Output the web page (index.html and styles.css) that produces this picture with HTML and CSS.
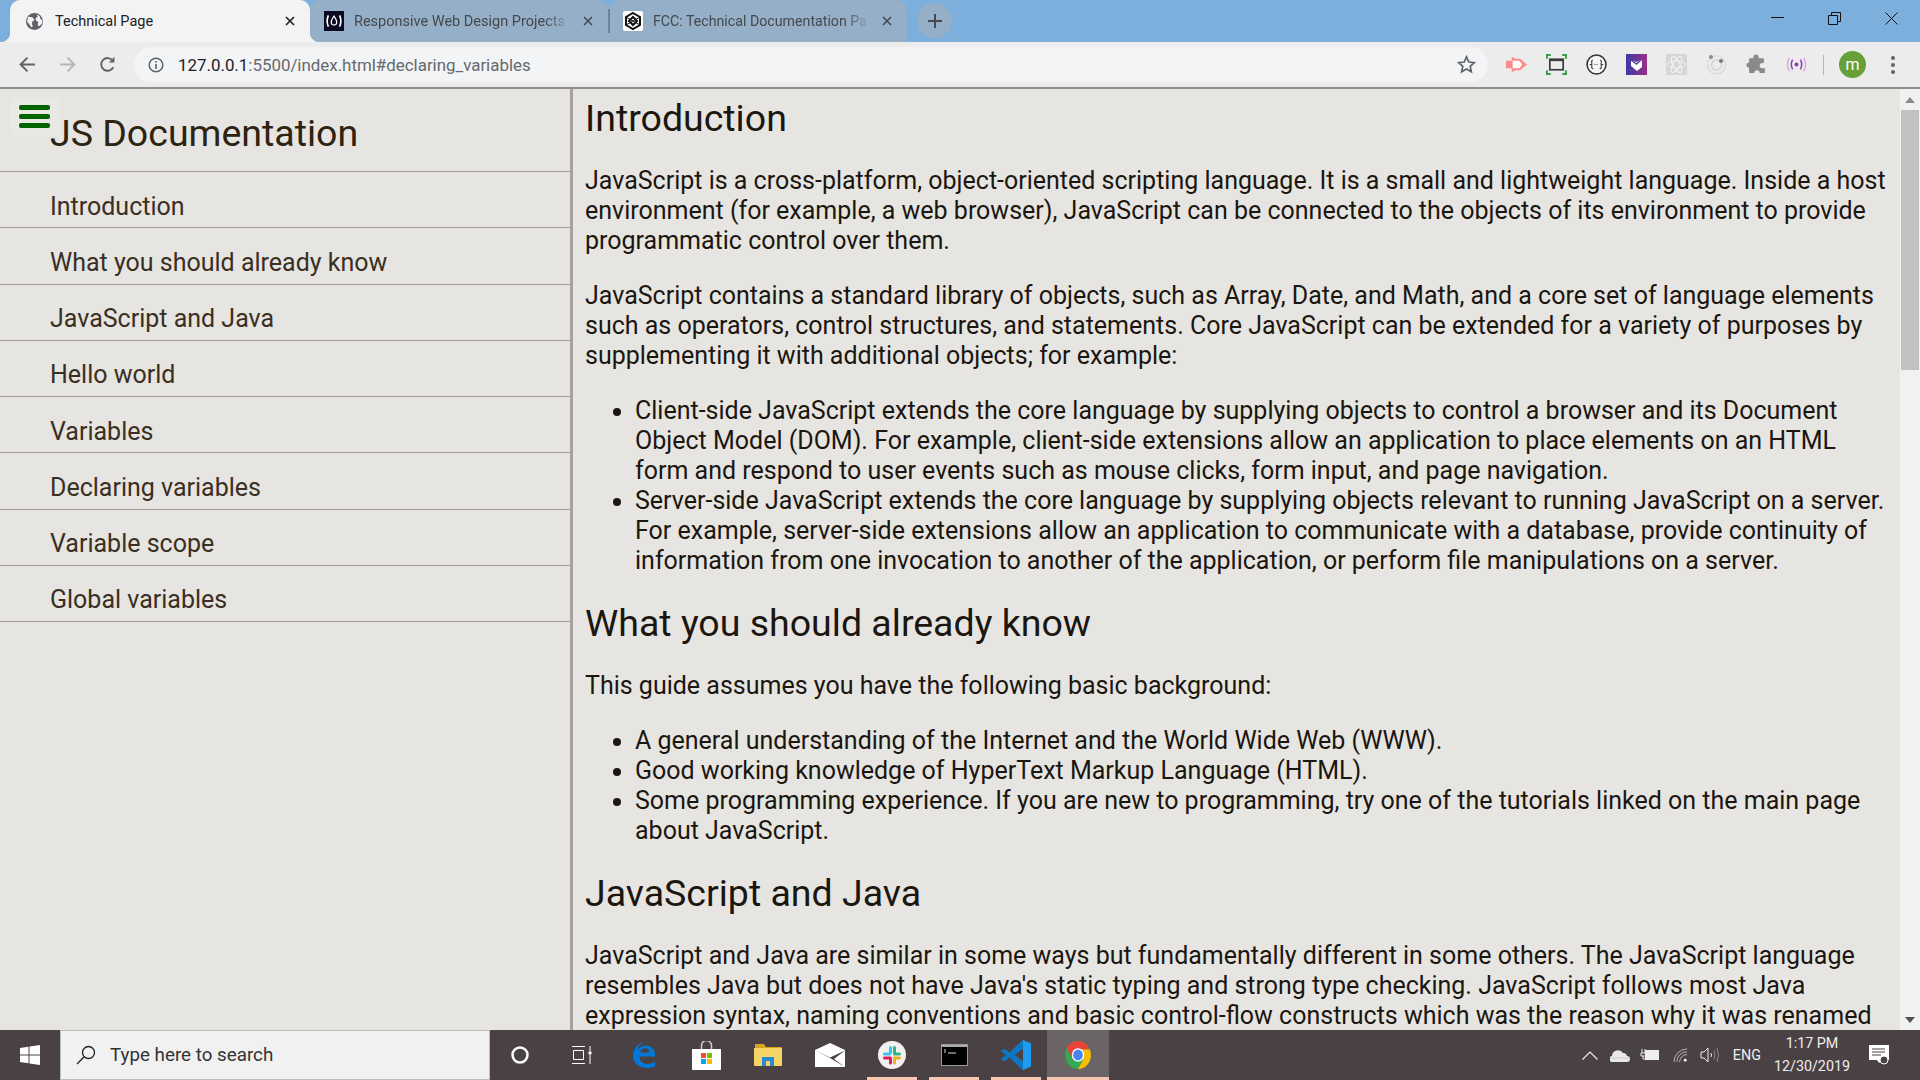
FILE: index.html
```html
<!DOCTYPE html>
<html lang="en">
<head>
<meta charset="utf-8">
<title>Technical Page</title>
<link rel="stylesheet" href="styles.css">
</head>
<body>
<div class="window">
  <header class="tabstrip">
    <div class="tab tab-active">
      <svg class="fav fav-globe" viewBox="0 0 16 16"><circle cx="8" cy="8" r="8" fill="#5f6368"/><path d="M2 3.500l4 .5 2 2.500-2 1.500-.5 2 1 2.500-1.500 1-2-3-2-2.500zM10 1.500l3 1.500.5 2.500 2 1.500-.5 3-2.500 2.500-1.500-1 .5-3-2-1.500-.5-2 2-1.500z" fill="#f3f3f4"/></svg>
      <span class="tab-title">Technical Page</span>
      <svg class="tab-x" viewBox="0 0 10 10"><path d="M1 1l8 8M9 1l-8 8" stroke="#202124" stroke-width="1.700"/></svg>
    </div>
    <div class="tab tab-second">
      <svg class="fav" viewBox="0 0 16 16"><rect width="16" height="16" fill="#0a0a23"/><path d="M3.500 3.500Q1.500 8 3.500 12.500M12.500 3.500Q14.500 8 12.500 12.500" stroke="#fff" stroke-width="1.300" fill="none"/><path d="M8 4q3 4 1.800 6.500-1.800 1.500-3.600 0Q5 8 8 4z" fill="none" stroke="#fff"/></svg>
      <span class="tab-title tab-fade">Responsive Web Design Projects</span>
      <svg class="tab-x" viewBox="0 0 10 10"><path d="M1 1l8 8M9 1l-8 8" stroke="#45484c" stroke-width="1.500"/></svg>
    </div>
    <i class="tab-sep"></i>
    <div class="tab tab-third">
      <svg class="fav" viewBox="0 0 20 20"><rect width="20" height="20" rx="2" fill="#fff"/><path d="M10 2l7 4v8l-7 4-7-4V6z" fill="none" stroke="#111" stroke-width="2"/><path d="M10 6l4 4-4 4-4-4z" fill="none" stroke="#111" stroke-width="2"/><path d="M3 6l14 8M17 6L3 14" stroke="#111" stroke-width="1"/></svg>
      <span class="tab-title tab-fade">FCC: Technical Documentation Pa</span>
      <svg class="tab-x" viewBox="0 0 10 10"><path d="M1 1l8 8M9 1l-8 8" stroke="#45484c" stroke-width="1.500"/></svg>
    </div>
    <div class="newtab"><svg viewBox="0 0 14 14"><path d="M7 0v14M0 7h14" stroke="#45484c" stroke-width="2"/></svg></div>
    <div class="winctl">
      <svg viewBox="0 0 13 13"><path d="M0 5.500h13" stroke="#111" stroke-width="1"/></svg>
      <svg viewBox="0 0 13 13"><path d="M.5 3.500h9v9h-9zM3.500 3.500V.5h9v9h-3" fill="none" stroke="#111"/></svg>
      <svg viewBox="0 0 13 13"><path d="M.5.5l12 12M12.500.5l-12 12" stroke="#111" fill="none"/></svg>
    </div>
  </header>

  <nav class="toolbar">
    <svg class="tb" viewBox="0 0 16 16"><path d="M15 8H2M8 1.500L1.500 8 8 14.500" fill="none" stroke="#5f6368" stroke-width="1.800"/></svg>
    <svg class="tb" viewBox="0 0 16 16"><path d="M1 8h13M8 1.500L14.500 8 8 14.500" fill="none" stroke="#b4b6b9" stroke-width="1.800"/></svg>
    <svg class="tb" viewBox="0 0 16 16"><path d="M13.500 10.500A6 6 0 1 1 13 4.500" fill="none" stroke="#5f6368" stroke-width="1.800"/><path d="M14.500.8v5.200H9.300z" fill="#5f6368"/></svg>
    <div class="omni">
      <svg class="info" viewBox="0 0 16 16"><circle cx="8" cy="8" r="6.800" fill="none" stroke="#5f6368" stroke-width="1.500"/><path d="M8 7v5M8 4v1.800" stroke="#5f6368" stroke-width="1.600"/></svg>
      <span class="url"><b>127.0.0.1</b>:5500/index.html#declaring_variables</span>
      <svg class="star" viewBox="0 0 20 20"><path d="M10 2l2.400 5.400 5.800.6-4.300 3.900 1.200 5.800L10 14.800l-5.100 2.900 1.200-5.800L1.800 8l5.800-.6z" fill="none" stroke="#5f6368" stroke-width="1.800"/></svg>
    </div>
    <div class="exts">
      <svg viewBox="0 0 22 20"><path d="M0 6h6V2l4 2h5l7 6-7 6h-5l-4 2v-4H0z" fill="#fb8b8b"/><path d="M7 6h7l3 4-3 4H7z" fill="#fff"/></svg>
      <svg viewBox="0 0 22 22"><path d="M1 5V1h4M17 1h4v4M21 17v4h-4M5 21H1v-4" fill="none" stroke="#3f9a45" stroke-width="2"/><rect x="4" y="5.500" width="14" height="11" fill="none" stroke="#3c3c3c" stroke-width="1.800"/><path d="M4 6.500h14" stroke="#3c3c3c" stroke-width="2"/></svg>
      <svg viewBox="0 0 20 20"><circle cx="10" cy="10" r="9" fill="#f7f7f7" stroke="#333" stroke-width="1.500"/><path d="M6.500 6Q5 6 5.500 8.500T4.500 10q1.500 0 1 2T7 14M13.500 6q1.500 0 1 2.500t1 1.500q-1.500 0-1 2T13 14" fill="none" stroke="#333"/><path d="M8 10h4" stroke="#555" stroke-dasharray="1 1"/></svg>
      <svg viewBox="0 0 21 21"><defs><linearGradient id="gr"><stop offset="0" stop-color="#3c3aa8"/><stop offset="1" stop-color="#9a2f86"/></linearGradient></defs><rect width="21" height="21" fill="url(#gr)"/><path d="M5 6l5.500 2L16 5v8l-5 4-6-5z" fill="#fff"/><path d="M5 6l5.500 4L16 5" fill="none" stroke="#5a3aa0" stroke-width="1.500"/></svg>
      <svg viewBox="0 0 21 21"><rect width="21" height="21" fill="#d6d6d6"/><g fill="none" stroke="#f4f4f4"><ellipse cx="10.500" cy="10.500" rx="9" ry="3.500"/><ellipse cx="10.500" cy="10.500" rx="9" ry="3.500" transform="rotate(60 10.500 10.500)"/><ellipse cx="10.500" cy="10.500" rx="9" ry="3.500" transform="rotate(120 10.500 10.500)"/></g></svg>
      <svg viewBox="0 0 21 21"><circle cx="10.500" cy="11" r="9" fill="none" stroke="#dcdcdc" stroke-width="1.500"/><circle cx="10.500" cy="11" r="5" fill="none" stroke="#d4d4d4" stroke-width="1.500"/><circle cx="5" cy="3" r="2" fill="#8a8a8a"/><circle cx="15" cy="7" r="2" fill="#777"/></svg>
      <svg viewBox="0 0 20 20"><path d="M7 3a2.500 2.500 0 0 1 5 0l0 1h5v4.500h-1.500a2.500 2.500 0 0 0 0 5H18V18H13a2.500 2.500 0 0 0-5 0H3v-5a2.500 2.500 0 0 1 0-5V4h4z" fill="#8a8a8a"/></svg>
      <svg viewBox="0 0 22 20"><circle cx="11" cy="10" r="2" fill="#8f35b8"/><path d="M7 5Q4 10 7 15M15 5q3 5 0 10" fill="none" stroke="#8f35b8" stroke-width="1.500"/><path d="M3.500 3Q-.5 10 3.500 17M18.500 3q4 7 0 14" fill="none" stroke="#dba4ee" stroke-width="1.500"/></svg>
    </div>
    <i class="tb-sep"></i>
    <div class="avatar">m</div>
    <svg class="kebab" viewBox="0 0 6 20"><circle cx="3" cy="3" r="2" fill="#5f6368"/><circle cx="3" cy="10" r="2" fill="#5f6368"/><circle cx="3" cy="17" r="2" fill="#5f6368"/></svg>
  </nav>

  <div class="viewport">
    <aside class="sidebar">
      <div class="side-head">
        <div class="burger"><i></i><i></i><i></i></div>
        <h1 class="side-title">JS Documentation</h1>
      </div>
      <a class="side-link">Introduction</a>
      <a class="side-link">What you should already know</a>
      <a class="side-link">JavaScript and Java</a>
      <a class="side-link">Hello world</a>
      <a class="side-link">Variables</a>
      <a class="side-link">Declaring variables</a>
      <a class="side-link">Variable scope</a>
      <a class="side-link">Global variables</a>
    </aside>
    <main class="doc">
      <h2>Introduction</h2>
      <p>JavaScript is a cross-platform, object-oriented scripting language. It is a small and lightweight language. Inside a host environment (for example, a web browser), JavaScript can be connected to the objects of its environment to provide programmatic control over them.</p>
      <p>JavaScript contains a standard library of objects, such as Array, Date, and Math, and a core set of language elements such as operators, control structures, and statements. Core JavaScript can be extended for a variety of purposes by supplementing it with additional objects; for example:</p>
      <ul>
        <li>Client-side JavaScript extends the core language by supplying objects to control a browser and its Document Object Model (DOM). For example, client-side extensions allow an application to place elements on an HTML form and respond to user events such as mouse clicks, form input, and page navigation.</li>
        <li>Server-side JavaScript extends the core language by supplying objects relevant to running JavaScript on a server. For example, server-side extensions allow an application to communicate with a database, provide continuity of information from one invocation to another of the application, or perform file manipulations on a server.</li>
      </ul>
      <h2>What you should already know</h2>
      <p>This guide assumes you have the following basic background:</p>
      <ul>
        <li>A general understanding of the Internet and the World Wide Web (WWW).</li>
        <li>Good working knowledge of HyperText Markup Language (HTML).</li>
        <li>Some programming experience. If you are new to programming, try one of the tutorials linked on the main page about JavaScript.</li>
      </ul>
      <h2>JavaScript and Java</h2>
      <p>JavaScript and Java are similar in some ways but fundamentally different in some others. The JavaScript language resembles Java but does not have Java's static typing and strong type checking. JavaScript follows most Java expression syntax, naming conventions and basic control-flow constructs which was the reason why it was renamed</p>
    </main>
    <div class="scrollbar">
      <svg class="sb-arrow" viewBox="0 0 10 6"><path d="M5 0l5 6H0z" fill="#8a8a8a"/></svg>
      <div class="sb-track"><div class="sb-thumb"></div></div>
      <svg class="sb-arrow" viewBox="0 0 10 6"><path d="M0 0h10L5 6z" fill="#505050"/></svg>
    </div>
  </div>

  <footer class="taskbar">
    <div class="start"><svg viewBox="0 0 20 20"><path d="M0 3l8.500-1.200v7.700H0zM9.500 1.600L20 0v9.500H9.500zM0 10.500h8.500v7.700L0 17zM9.500 10.500H20V20L9.500 18.400z" fill="#fff"/></svg></div>
    <div class="search">
      <svg viewBox="0 0 20 20"><circle cx="12.500" cy="7.500" r="6" fill="none" stroke="#222" stroke-width="1.300"/><path d="M8.200 11.800L1 19" stroke="#222" stroke-width="1.300"/></svg>
      <span>Type here to search</span>
    </div>
    <div class="task-icons">
      <div class="ti"><svg class="ic-cortana" viewBox="0 0 18 18"><circle cx="9" cy="9" r="7.500" fill="none" stroke="#fff" stroke-width="2.500"/></svg></div>
      <div class="ti"><svg class="ic-view" viewBox="0 0 20 18"><path d="M0 .5h13M0 17.500h13M1.500 4.500h10v9h-10zM18 0v5M18 9v9" fill="none" stroke="#fff"/><rect x="16.500" y="5.500" width="3" height="3" fill="#fff"/></svg></div>
      <div class="ti"><svg class="ic-edge" viewBox="0 0 24 26"><path d="M23 14.500H7.500c0 5 3.500 7.500 8 7.500 2.800 0 5.300-.8 7.500-2.200v4.400c-2.300 1.200-5 1.800-8 1.800C6.500 26 1 21 1 13.500 1 7 5.500 1.500 12.500 0 8 2 6 5 5.800 7.500 8 4.800 11 3.500 14 3.500c5.500 0 9 4 9 9.500zM8 10.500h9.500c0-3-2-4.300-4.300-4.300-2.300 0-4.500 1.500-5.200 4.300z" fill="#0078d7" fill-rule="evenodd"/></svg></div>
      <div class="ti"><svg class="ic-store" viewBox="0 0 29 29"><path d="M9.500 8V4.500a5 5 0 0 1 10 0V8" fill="none" stroke="#cfcfcf" stroke-width="1.500"/><path d="M0 8h29v20a1 1 0 0 1-1 1H1a1 1 0 0 1-1-1z" fill="#fff"/><path d="M9 12h5v5H9z" fill="#f25022"/><path d="M15 12h5v5h-5z" fill="#7fba00"/><path d="M9 18h5v5H9z" fill="#00a4ef"/><path d="M15 18h5v5h-5z" fill="#ffb900"/></svg></div>
      <div class="ti"><svg class="ic-folder" viewBox="0 0 28 22"><path d="M1 0h9l2 3h15a1 1 0 0 1 1 1v17a1 1 0 0 1-1 1H1z" fill="#d9a520"/><path d="M0 4h28v17a1 1 0 0 1-1 1H1a1 1 0 0 1-1-1z" fill="#f6d365"/><path d="M8 13h12v9h-4v-5h-4v5H8z" fill="#2a8ad4"/></svg></div>
      <div class="ti"><svg class="ic-mail" viewBox="0 0 30 24"><path d="M0 7L15 0l15 7v17H0z" fill="#fff"/><path d="M0 7.500l15 7 15-7-11 8.500 11 8-15-9z" fill="#4a4145"/></svg></div>
      <div class="ti ti-run"><svg class="ic-slack" viewBox="0 0 28 28"><ellipse cx="14" cy="14" rx="14" ry="14" fill="#f4f0f0"/><rect x="5" y="11.500" width="8" height="3" rx="1.500" fill="#36c5f0"/><rect x="11" y="5" width="3" height="8" rx="1.500" fill="#36c5f0"/><rect x="15" y="5" width="3" height="8" rx="1.500" fill="#2eb67d"/><rect x="15" y="11.500" width="8" height="3" rx="1.500" fill="#2eb67d"/><rect x="15" y="15.500" width="8" height="3" rx="1.500" fill="#ecb22e"/><rect x="15" y="15.500" width="3" height="8" rx="1.500" fill="#ecb22e"/><rect x="5" y="15.500" width="8" height="3" rx="1.500" fill="#e01e5a"/><rect x="11" y="15.500" width="3" height="8" rx="1.500" fill="#e01e5a"/></svg></div>
      <div class="ti ti-run"><svg class="ic-term" viewBox="0 0 27 22"><rect x=".5" y=".5" width="26" height="21" fill="#000" stroke="#999"/><rect x="1" y="1" width="25" height="2" fill="#aaa"/><path d="M3 6h2M3 8h2M7 9h8" stroke="#ddd"/></svg></div>
      <div class="ti ti-run"><svg class="ic-code" viewBox="0 0 30 30"><path d="M22 0l8 3.500v23L22 30 8.500 17l-5 4L0 19l5.500-4L0 11l3.500-2 5 4zM22 8.500L13 15l9 6.500z" fill="#1f9cf0" fill-rule="evenodd"/><path d="M22 0L8.500 13l-5-4L0 11l5.500 4L0 19l3.500 2 5-4L22 30v-8.500L13 15l9-6.500z" fill="#0b76c4"/></svg></div>
      <div class="ti ti-run ti-on"><svg class="ic-chrome" viewBox="0 0 48 52"><ellipse cx="24" cy="26" rx="24" ry="26" fill="#34a853"/><path d="M24 0C15 0 8 4 3 12l11 22 10-18h22C42 6 34 0 24 0z" fill="#ea4335"/><path d="M46 16H24l10 18-10 18h2c13-1 22-12 22-26 0-3-1-7-2-10z" fill="#fbbc05"/><ellipse cx="24" cy="26" rx="11.500" ry="12.500" fill="#fff"/><ellipse cx="24" cy="26" rx="9" ry="10" fill="#4285f4"/></svg></div>
    </div>
    <div class="tray">
      <svg class="t-chev" viewBox="0 0 16 9"><path d="M.5 8.500L8 1l7.500 7.500" fill="none" stroke="#eee" stroke-width="1.200"/></svg>
      <svg class="t-cloud" viewBox="0 0 20 13"><path d="M3 13a3 3 0 0 1-1-6 6 6 0 0 1 11-3 4 4 0 0 1 4 3 3 3 0 0 1 0 6z" fill="#e8e8e8"/><path d="M0 9h20" stroke="#bbb" stroke-width=".6"/></svg>
      <svg class="t-batt" viewBox="0 0 20 12"><path d="M2 0v4M5 0v4M1 4h5v3H1zM3 7v3h3" stroke="#eee" fill="none"/><rect x="5.500" y="1.500" width="13" height="9" fill="#eee" stroke="#eee"/></svg>
      <svg class="t-wifi" viewBox="0 0 16 16"><path d="M1 15A14 14 0 0 1 15 1M4 15A11 11 0 0 1 15 4M7 15a8 8 0 0 1 8-8" fill="none" stroke="#bbb"/><circle cx="13" cy="13" r="1.500" fill="#fff"/></svg>
      <svg class="t-vol" viewBox="0 0 20 16"><path d="M1 5h3l4-4v14l-4-4H1z" fill="none" stroke="#eee"/><path d="M11 6q1 2 0 4" fill="none" stroke="#eee"/><path d="M14 3.500q2 4.500 0 9M17 1q3 7 0 14" fill="none" stroke="#888"/></svg>
      <span class="t-lang">ENG</span>
      <div class="clock"><span>1:17 PM</span><span>12/30/2019</span></div>
      <svg class="t-note" viewBox="0 0 20 20"><path d="M0 0h20v15h-7l-3 3-2-3H0z" fill="#fff"/><path d="M3 4h13M3 7h13M3 10h9" stroke="#4a4145"/><circle cx="15" cy="15" r="4" fill="#4a4145" stroke="#fff"/></svg>
    </div>
  </footer>
</div>
</body>
</html>
```

FILE: styles.css
```css
* { box-sizing: border-box; }
html, body { margin: 0; height: 100%; overflow: hidden; }
body { font-family: Roboto, "Liberation Sans", sans-serif; color: #1b160f; }
svg { display: block; flex: none; }
.window { display: flex; flex-direction: column; height: 1080px; width: 1920px; }

.tabstrip { height: 42px; flex: none; background: #7dafdc; display: flex; padding-left: 10px; align-items: stretch; }
.tab { flex: none; display: flex; align-items: center; background: #94afc7; font-size: 14.500px; color: #45484c; border-radius: 10px 10px 0 0; position: relative; }
.tab-active { width: 300px; padding: 0 15px 0 16px; background: #f3f3f4; color: #202124; z-index: 1; }
.tab-active::before, .tab-active::after { content: ""; position: absolute; bottom: 0; width: 9px; height: 9px; }
.tab-active::before { left: -9px; background: radial-gradient(circle at 0 0, transparent 9px, #f3f3f4 9px); }
.tab-active::after { right: -9px; background: radial-gradient(circle at 100% 0, transparent 9px, #f3f3f4 9px); }
.tab-second { width: 298px; padding: 0 15px 0 14px; }
.tab-third { width: 297px; padding: 0 15px 0 13px; font-size: 14.200px; }
.tab-sep { width: 2px; flex: none; background: linear-gradient(#7dafdc 0 4px, #94afc7 4px 9px, #6f8499 9px 33px, #94afc7 33px); }
.fav { width: 20px; height: 20px; margin-right: 10px; }
.fav-globe { width: 17px; height: 17px; margin-right: 12px; }
.tab-title { flex: 1; white-space: nowrap; overflow: hidden; min-width: 0; }
.tab-fade { mask-image: linear-gradient(to right, #000 88%, transparent 100%); }
.tab-x { width: 10px; height: 10px; margin-left: 12px; }
.tab-active .tab-x { margin-left: 10px; }
.newtab { width: 35px; height: 35px; border-radius: 50%; background: #94afc7; margin: 3px 0 0 10px; display: flex; align-items: center; justify-content: center; }
.newtab svg { width: 14px; height: 14px; }
.winctl { margin-left: auto; display: flex; gap: 44px; padding: 12px 22px 0 0; align-self: flex-start; }
.winctl svg { width: 13px; height: 13px; }

.toolbar { height: 47px; flex: none; background: #ececec; border-bottom: 2px solid #8e8e8e; display: flex; align-items: center; padding: 0 0 0 19px; }
.tb { width: 17px; height: 17px; margin-right: 23px; }
.tb:nth-of-type(3) { margin-right: 18px; }
.omni { width: 1354px; height: 35px; border-radius: 18px; background: #f3f4f6; display: flex; align-items: center; padding: 0 12px 0 14px; }
.info { width: 16px; height: 16px; margin-right: 14px; }
.url { font-size: 16.900px; color: #66696d; flex: 1; white-space: nowrap; }
.url b { font-weight: 400; color: #202124; }
.star { width: 19px; height: 19px; }
.exts { display: flex; align-items: center; gap: 19px; margin-left: 18px; flex: none; }
.exts svg { width: 21px; height: 21px; }
.tb-sep { width: 1px; height: 20px; background: #b5b5b5; margin-left: 16px; flex: none; }
.avatar { width: 27px; height: 27px; flex: none; border-radius: 50%; background: #689f38; color: #fff; font-size: 16px; display: flex; align-items: center; justify-content: center; margin-left: 15px; }
.kebab { width: 6px; height: 20px; margin-left: 24px; }

.viewport { flex: 1; min-height: 0; display: flex; background: #e6e5e1; }
.sidebar { width: 573px; flex: none; border-right: 3px solid #a8a398; }
.side-head { height: 83px; position: relative; padding: 22px 0 0 50px; border-bottom: 1px solid #a09e96; color: #2c2310; }
.burger { position: absolute; left: 10px; top: 9px; width: 49px; height: 37px; padding: 7px 9px; display: flex; flex-direction: column; gap: 4px; background: #e9e8e3; }
.burger i { display: block; height: 6px; width: 31px; border-radius: 2px; background: #006400; }
.side-title { margin: 0; font-size: 37.500px; line-height: 45px; font-weight: 400; }
.side-link { display: block; height: 56.250px; padding: 19.500px 0 0 50px; line-height: 30px; font-size: 25px; color: #3a2f22; border-bottom: 1px solid #a09e96; }

.doc { flex: 1; min-width: 0; height: 100%; overflow: hidden; padding: 0 10px 0 12px; font-size: 25px; line-height: 30px; }
.doc h2 { font-size: 37.500px; line-height: 45px; font-weight: 400; margin: 25px 0; }
.doc h2:first-child { margin-top: 0; padding-top: 7px; }
.doc p { margin: 25px 0; }
.doc ul { margin: 25px 0; padding-left: 50px; }

.scrollbar { width: 20px; flex: none; background: #f1f1f1; display: flex; flex-direction: column; align-items: center; padding: 8px 0 7px; }
.sb-arrow { width: 10px; height: 6px; }
.sb-track { flex: 1; width: 100%; padding: 7px 1px; }
.sb-thumb { height: 260px; background: #c1c1c1; }

.taskbar { height: 50px; flex: none; display: flex; align-items: stretch; background: #4a4145; color: #eee; }
.start { width: 60px; display: flex; align-items: center; justify-content: center; }
.start svg { width: 20px; height: 20px; }
.search { width: 430px; background: #f1f1f1; color: #333; border: 1px solid #bdbdbd; display: flex; align-items: center; gap: 14px; padding-left: 15px; font-size: 18.800px; }
.search svg { width: 20px; height: 20px; }
.task-icons { display: flex; margin-left: -1px; }
.ti { width: 62px; display: flex; align-items: center; justify-content: center; position: relative; }
.ti-run::after { content: ""; position: absolute; left: 6px; right: 6px; bottom: 0; height: 3px; background: #f8c6b0; }
.ti-on { background: #6a6467; width: 62px; }
.ti-on::after { left: 0; right: 0; }
.ic-cortana { width: 18px; height: 18px; }
.ic-view { width: 20px; height: 18px; }
.ic-edge { width: 24px; height: 26px; }
.ic-store { width: 29px; height: 29px; }
.ic-folder { width: 28px; height: 22px; }
.ic-mail { width: 30px; height: 24px; }
.ic-slack { width: 28px; height: 28px; }
.ic-term { width: 27px; height: 22px; }
.ic-code { width: 30px; height: 30px; }
.ic-chrome { width: 28px; height: 28px; }
.tray { margin-left: auto; display: flex; align-items: center; padding-right: 31px; font-size: 14.300px; }
.t-chev { width: 16px; height: 9px; margin-right: 12px; }
.t-cloud { width: 20px; height: 13px; margin-right: 10px; }
.t-batt { width: 20px; height: 12px; margin-right: 13px; }
.t-wifi { width: 15px; height: 15px; margin-right: 12px; }
.t-vol { width: 20px; height: 16px; margin-right: 13px; }
.t-lang { margin-right: 13px; }
.clock { display: flex; flex-direction: column; align-items: center; line-height: 23px; margin-right: 19px; }
.t-note { width: 20px; height: 20px; }
```
